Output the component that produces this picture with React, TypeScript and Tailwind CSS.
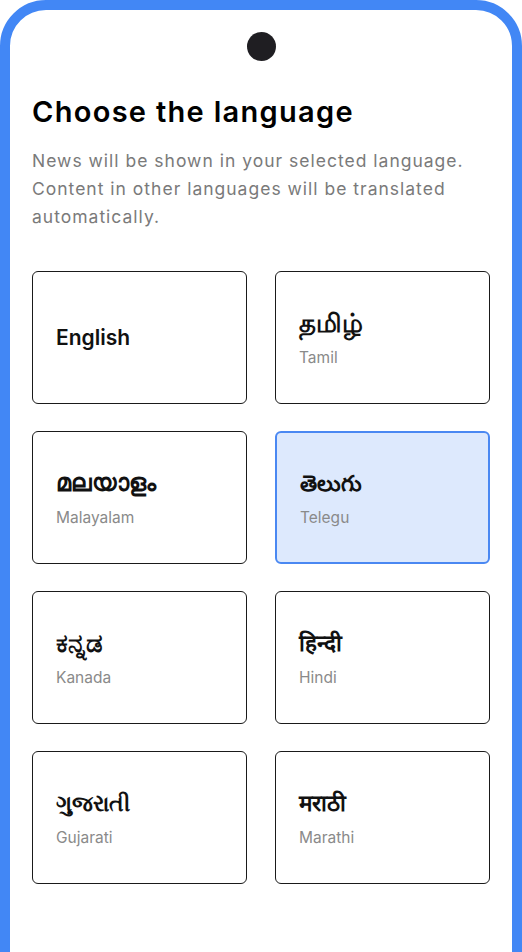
import React from 'react';

type Lang = { native: string; english: string; size: string; selected?: boolean };

const languages: Lang[] = [
  { native: 'English', english: '', size: 'text-[21px]' },
  { native: 'தமிழ்', english: 'Tamil', size: 'text-[26px]' },
  { native: 'മലയാളം', english: 'Malayalam', size: 'text-[23.5px]' },
  { native: 'తెలుగు', english: 'Telegu', size: 'text-[22px]', selected: true },
  { native: 'ಕನ್ನಡ', english: 'Kanada', size: 'text-[26px]' },
  { native: 'हिन्दी', english: 'Hindi', size: 'text-[22.5px]' },
  { native: 'ગુજરાતી', english: 'Gujarati', size: 'text-[22px]' },
  { native: 'मराठी', english: 'Marathi', size: 'text-[22.5px]' },
];

const App = () => {
  return (
    <div className="h-[952px] w-[522px] overflow-hidden bg-white">
      <div className="h-[1000px] rounded-t-[46px] border-[10px] border-[#4287f5] bg-white">
        <div className="flex justify-center pt-[22px]">
          <div className="h-[29px] w-[29px] rounded-full bg-[#1f1e22]"></div>
        </div>
        <div className="px-[22px] pt-[33px]">
          <h1 className="text-[29px] font-semibold leading-[36px] tracking-[1.3px] text-black [font-family:Inter,sans-serif]">
            Choose the language
          </h1>
          <p className="mt-[17px] text-[17.5px] leading-[28px] tracking-[1px] text-[#7a7a7a] [font-family:Inter,sans-serif]">
            News will be shown in your selected language. Content in other languages will be translated automatically.
          </p>
          <div className="mt-[40px] grid grid-cols-2 gap-x-[28px] gap-y-[27px]">
            {languages.map((lang) => (
              <div
                key={lang.native}
                className={
                  lang.selected
                    ? 'flex h-[133px] flex-col justify-center rounded-[6px] border-2 border-[#4a88f2] bg-[#dde9fd] px-[23px]'
                    : 'flex h-[133px] flex-col justify-center rounded-[6px] border-[1.5px] border-[#1a1a1a] bg-white px-[23px]'
                }
              >
                <div className={`${lang.size} font-semibold leading-[30px] text-[#111] [font-family:Inter,sans-serif]`}>
                  {lang.native}
                </div>
                {lang.english && (
                  <div className="mt-[10px] text-[15.5px] leading-[20px] text-[#8a8a8a] [font-family:Inter,sans-serif]">
                    {lang.english}
                  </div>
                )}
              </div>
            ))}
          </div>
        </div>
      </div>
    </div>
  );
};

export default App;
